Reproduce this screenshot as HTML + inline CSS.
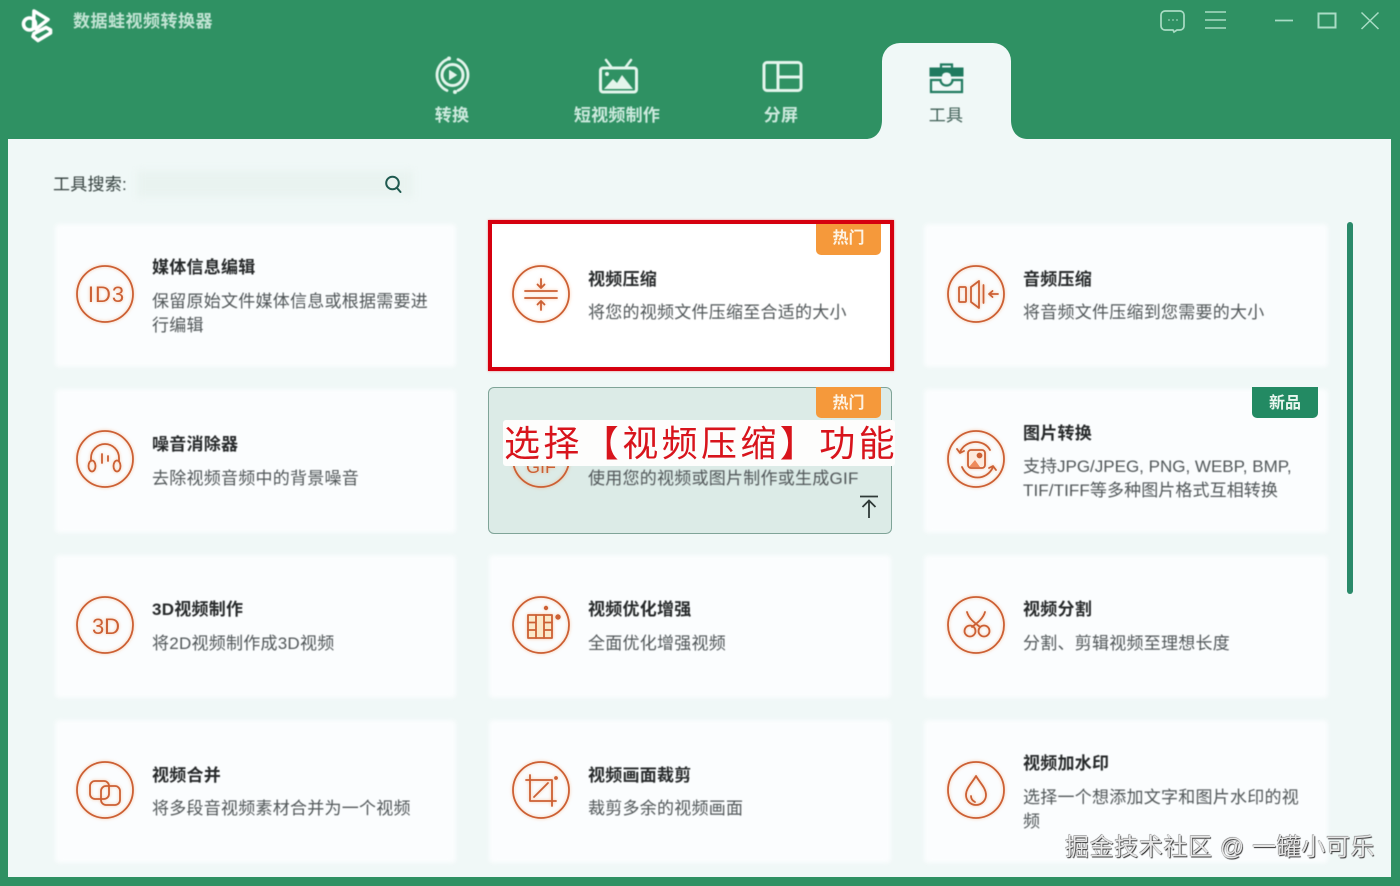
<!DOCTYPE html>
<html lang="zh-CN">
<head>
<meta charset="utf-8">
<title>数据蛙视频转换器</title>
<style>
html,body{margin:0;padding:0}
body{width:1400px;height:886px;position:relative;overflow:hidden;background:#2f9163;font-family:"Liberation Sans","Noto Sans CJK SC",sans-serif}
#main{position:absolute;left:8px;top:139px;width:1383px;height:738px;background:#f0f8f7}
.card{position:absolute;background:#fbfdfe;border-radius:4px;filter:blur(2.5px)}
.t,.d,.n{position:absolute;white-space:nowrap;line-height:24px;font-size:17px;letter-spacing:.25px}
.t{font-weight:700;color:#26292a;filter:blur(.45px)}
.d{color:#505658;filter:blur(.45px)}
.n{color:#cdeade;font-size:17px;filter:blur(.5px);text-align:center;font-weight:700}
svg{position:absolute;overflow:visible}
.ic{width:60px;height:60px;fill:none;stroke:#cc6034;stroke-width:1.8;stroke-linecap:round;stroke-linejoin:round;filter:blur(.35px) drop-shadow(0 0 1.500px rgba(245,150,90,.55))}
.badge{position:absolute;width:65px;height:31px;background:#f5993b;border-radius:0 0 5px 5px;color:#fdf3e4;font-size:16px;font-weight:700;text-align:center;filter:blur(.3px)}
</style>
</head>
<body>
<div id="main"></div>

<!-- top bar logo and title -->
<svg style="left:0;top:0;filter:blur(.4px)" width="60" height="50" viewBox="0 0 60 50" fill="none" stroke="#fff" stroke-width="3.600" stroke-linejoin="round" stroke-linecap="round">
<path d="M34 11 L48 19.500 L36 29 L33.500 27 Z"/>
<circle cx="29.500" cy="24" r="6"/>
<path d="M34 33.500 L46 27.500 L50.500 30 L50.500 33 L38 40.500 L33 36.500 Z"/>
</svg>
<div class="n" style="left:73px;top:10px;letter-spacing:.5px;color:#c3e4d4;font-size:17px;font-weight:700">数据蛙视频转换器</div>

<!-- window controls -->
<svg style="left:1150px;top:0;filter:blur(.3px)" width="250" height="40" viewBox="1150 0 250 40" fill="none" stroke="#a9dcc5" stroke-width="1.700">
<path d="M1165 11h15a4 4 0 0 1 4 4v11a4 4 0 0 1-4 4h-3l-3 2-1-2h-8a4 4 0 0 1-4-4V15a4 4 0 0 1 4-4z"/>
<path d="M1168.500 20h1M1172.500 20h1M1176.500 20h1" stroke-width="2"/>
<path d="M1205 12h21M1205 20h21M1205 28h21" stroke-width="1.500"/>
<path d="M1275 20.500h18" stroke-width="1.800"/>
<rect x="1318.500" y="13.500" width="17" height="14" stroke-width="2"/>
<path d="M1361.500 12.500l17 16.500M1378.500 12.500l-17 16.500" stroke-width="1.500"/>
</svg>

<!-- active tab -->
<div style="position:absolute;left:882px;top:43px;width:129px;height:110px;background:#f0f8f7;border-radius:18px 18px 0 0"></div>
<svg style="left:866px;top:120px" width="16" height="20" viewBox="0 0 16 20"><path d="M16 0V19H0C9 19 16 12 16 0Z" fill="#f0f8f7"/></svg>
<svg style="left:1011px;top:120px" width="16" height="20" viewBox="0 0 16 20"><path d="M0 0V19H16C7 19 0 12 0 0Z" fill="#f0f8f7"/></svg>

<!-- nav icons -->
<svg style="left:430px;top:53px;filter:blur(.4px)" width="46" height="44" viewBox="430 53 46 44" fill="none" stroke="#e4f5ec" stroke-linecap="round">
<path d="M447 59.500A17 17 0 0 0 447 90.500" stroke-width="2.800"/>
<path d="M458 59.500A17 17 0 0 1 458 90.500" stroke-width="2.800"/>
<circle cx="449" cy="58.500" r="2" fill="#e4f5ec" stroke="none"/>
<circle cx="455" cy="92" r="2" fill="#e4f5ec" stroke="none"/>
<circle cx="452.500" cy="75" r="10.500" stroke-width="3"/>
<path d="M449.500 70.500l7 4.500-7 4.500z" fill="#e4f5ec" stroke-width="1" stroke-linejoin="round"/>
</svg>
<svg style="left:595px;top:55px;filter:blur(.4px)" width="46" height="42" viewBox="595 55 46 42" fill="none" stroke="#e4f5ec" stroke-linecap="round" stroke-linejoin="round">
<rect x="600.500" y="68" width="36" height="24" rx="2.500" stroke-width="3"/>
<path d="M606 60l6 8M631 60l-6 8" stroke-width="2.500"/>
<path d="M604 89l9-10 4 4 5-8 11 14z" fill="#e4f5ec" stroke="none"/>
<circle cx="607" cy="74" r="2" fill="#e4f5ec" stroke="none"/>
</svg>
<svg style="left:760px;top:58px;filter:blur(.4px)" width="46" height="38" viewBox="760 58 46 38" fill="none" stroke="#e4f5ec" stroke-width="3">
<rect x="764" y="62.500" width="37" height="28" rx="3"/>
<path d="M778 62.500v28M778 77h23"/>
</svg>
<svg style="left:926px;top:60px;filter:blur(.4px)" width="42" height="36" viewBox="926 60 42 36" fill="none" stroke="#1f7a5f" stroke-width="2.200">
<path d="M941 68v-3.500h11V68" />
<path d="M930 68h33v8h-11.500a5 4 0 0 0-10 0H930z" fill="#1f7a5f" stroke="#1f7a5f" stroke-width="1"/>
<path d="M931 80v12h31V80h-9.500a6 5.500 0 0 1-12 0z"/>
</svg>

<div class="n" style="left:402px;top:104px;width:100px">转换</div>
<div class="n" style="left:557px;top:104px;width:120px">短视频制作</div>
<div class="n" style="left:731px;top:104px;width:100px">分屏</div>
<div class="n" style="left:896px;top:104px;width:100px;color:#3f5f56;font-weight:400">工具</div>

<!-- search -->
<div class="d" style="left:53px;top:173px;color:#34403e">工具搜索:</div>
<div style="position:absolute;left:137px;top:171px;width:276px;height:26px;background:#e9f3f0;filter:blur(4px)"></div>
<svg style="left:382px;top:173px" width="22" height="22" viewBox="0 0 22 22" fill="none" stroke="#1f5a50" stroke-width="2" stroke-linecap="round"><circle cx="10.500" cy="10" r="6.300"/><path d="M15 15l3.500 4"/></svg>

<!-- scrollbar -->
<div style="position:absolute;left:1347px;top:222px;width:6px;height:372px;border-radius:3px;background:#2a8a6a"></div>

<!-- cards -->
<div class="card" style="left:55px;top:224px;width:401px;height:143px"></div>
<div class="card" style="left:489px;top:224px;width:402px;height:143px;background:#fff"></div>
<div class="card" style="left:924px;top:224px;width:404px;height:143px"></div>
<div class="card" style="left:55px;top:389px;width:401px;height:144px"></div>
<div style="position:absolute;border-radius:6px;left:488px;top:387px;width:402px;height:145px;background:#dcebe7;border:1px solid #7fa498"></div>
<div class="card" style="left:924px;top:389px;width:404px;height:144px"></div>
<div class="card" style="left:55px;top:555px;width:401px;height:143px"></div>
<div class="card" style="left:489px;top:555px;width:402px;height:143px"></div>
<div class="card" style="left:924px;top:555px;width:404px;height:143px"></div>
<div class="card" style="left:55px;top:720px;width:401px;height:143px"></div>
<div class="card" style="left:489px;top:720px;width:402px;height:143px"></div>
<div class="card" style="left:924px;top:720px;width:404px;height:143px"></div>

<!-- red box -->
<div style="position:absolute;left:488px;top:220px;width:398px;height:143px;border:4px solid #d5000f;box-shadow:0 0 2px rgba(230,60,60,.6)"></div>

<!-- badges -->
<div class="badge" style="left:816px;top:224px;line-height:29px">热门</div>
<div class="badge" style="left:816px;top:387px;line-height:34px">热门</div>
<div class="badge" style="left:1252px;top:387px;width:66px;background:#238a63;color:#e9f6ef;line-height:34px">新品</div>

<!-- icons -->
<svg class="ic" style="left:75px;top:264px" viewBox="0 0 60 60"><circle cx="30" cy="30" r="28"/><text x="31.500" y="38" text-anchor="middle" font-family="Liberation Sans,sans-serif" font-size="22" letter-spacing="1" fill="#cc6034" stroke="none">ID3</text></svg>

<svg class="ic" style="left:511px;top:264px" viewBox="0 0 60 60"><circle cx="30" cy="30" r="28"/><path d="M14 27h32M14 34h32M30 15v9M26.500 20.500L30 24l3.500-3.500M30 46v-9M26.500 40.500L30 37l3.500 3.500"/></svg>

<svg class="ic" style="left:946px;top:264px" viewBox="0 0 60 60"><circle cx="30" cy="30" r="28"/><rect x="13" y="23" width="7" height="15" rx="1"/><path d="M25 23l8-6v27l-8-6zM37.500 21v18M52 30h-9M46.500 27L43 30l3.500 3"/></svg>

<svg class="ic" style="left:75px;top:429px" viewBox="0 0 60 60"><circle cx="30" cy="30" r="28"/><path d="M16 32v-3a14 14 0 0 1 28 0v3M27 25v9M33 27v5"/><ellipse cx="17" cy="37" rx="3.500" ry="5.500"/><ellipse cx="42" cy="37" rx="3.500" ry="5.500"/></svg>

<svg class="ic" style="left:511px;top:429px" viewBox="0 0 60 60"><circle cx="30" cy="30" r="28"/><text x="30" y="44" text-anchor="middle" font-family="Liberation Sans,sans-serif" font-size="18" fill="#cc6034" stroke="none">GIF</text></svg>

<svg class="ic" style="left:946px;top:429px" viewBox="0 0 60 60"><circle cx="30" cy="30" r="28"/><rect x="22" y="21" width="17" height="18" rx="3" fill="#fde9dc"/><circle cx="33.500" cy="26.500" r="2" fill="#cc6034"/><path d="M23 38l6-7 5 7z" fill="#ee8a5a" stroke="none"/><path d="M14 23C20 10 38 10 44 21M47 38C41 52 22 52 16 38M11 20l3 4 4-2M50 41l-3-4-4 2"/></svg>

<svg class="ic" style="left:75px;top:595px" viewBox="0 0 60 60"><circle cx="30" cy="30" r="28"/><text x="31" y="39" text-anchor="middle" font-family="Liberation Sans,sans-serif" font-size="22" fill="#cc6034" stroke="none">3D</text></svg>

<svg class="ic" style="left:511px;top:595px" viewBox="0 0 60 60"><circle cx="30" cy="30" r="28"/><rect x="17" y="20" width="24" height="23" fill="#fbe9c9"/><path d="M25 20v23M33 20v23M17 27.500h8M17 35h8M33 27.500h8M33 35h8"/><circle cx="35" cy="13" r="1.300" fill="#cc6034"/><circle cx="47" cy="22" r="1.800" fill="#cc6034"/></svg>

<svg class="ic" style="left:946px;top:595px" viewBox="0 0 60 60"><circle cx="30" cy="30" r="28"/><circle cx="24" cy="36" r="5.500"/><circle cx="38" cy="36" r="5.500"/><path d="M21 17C23 24 29 28 34 32M39 17C37 24 31 28 26 32"/></svg>

<svg class="ic" style="left:75px;top:760px" viewBox="0 0 60 60"><circle cx="30" cy="30" r="28"/><rect x="15" y="21" width="19" height="18" rx="5"/><rect x="26" y="26" width="19" height="19" rx="5"/></svg>

<svg class="ic" style="left:511px;top:760px" viewBox="0 0 60 60"><circle cx="30" cy="30" r="28"/><path d="M19 15v26h26M15 20h26v26M23 37l14-14"/><circle cx="45" cy="18" r="1" fill="#cc6034"/></svg>

<svg class="ic" style="left:946px;top:760px" viewBox="0 0 60 60"><circle cx="30" cy="30" r="28"/><path d="M30 16c-4 7-10 12-10 19a10 10 0 0 0 20 0c0-7-6-12-10-19zM25 36c0 3 2 5 4 6"/></svg>

<!-- row 1 -->
<div class="t" style="left:152px;top:256px">媒体信息编辑</div>
<div class="d" style="left:152px;top:290px">保留原始文件媒体信息或根据需要进</div>
<div class="d" style="left:152px;top:314px">行编辑</div>
<div class="t" style="left:588px;top:268px">视频压缩</div>
<div class="d" style="left:588px;top:301px">将您的视频文件压缩至合适的大小</div>
<div class="t" style="left:1023px;top:268px">音频压缩</div>
<div class="d" style="left:1023px;top:301px">将音频文件压缩到您需要的大小</div>

<!-- row 2 -->
<div class="t" style="left:152px;top:433px">噪音消除器</div>
<div class="d" style="left:152px;top:467px">去除视频音频中的背景噪音</div>
<div class="t" style="left:588px;top:433px">GIF制作</div>
<div class="d" style="left:588px;top:467px">使用您的视频或图片制作或生成GIF</div>
<div class="t" style="left:1023px;top:422px">图片转换</div>
<div class="d" style="left:1023px;top:455px;letter-spacing:0">支持JPG/JPEG, PNG, WEBP, BMP,</div>
<div class="d" style="left:1023px;top:479px;letter-spacing:.1px">TIF/TIFF等多种图片格式互相转换</div>
<svg style="left:858px;top:494px" width="22" height="26" viewBox="0 0 22 26" fill="none" stroke="#2f3a38" stroke-width="1.800"><path d="M2 2.500h18M11 7v17M4.500 13L11 6.500 17.500 13"/></svg>

<!-- overlay caption -->
<div style="position:absolute;left:503px;top:420px;width:392px;height:46px;background:#fdfdfc;border-radius:3px"></div>
<div style="position:absolute;left:504px;top:421px;white-space:nowrap;font-size:36px;line-height:46px;letter-spacing:3.400px;color:#d8141c;font-family:'Liberation Sans','Noto Sans CJK SC',sans-serif;filter:blur(.3px)">选择【视频压缩】功能</div>

<!-- row 3 -->
<div class="t" style="left:152px;top:598px">3D视频制作</div>
<div class="d" style="left:152px;top:632px">将2D视频制作成3D视频</div>
<div class="t" style="left:588px;top:598px">视频优化增强</div>
<div class="d" style="left:588px;top:632px">全面优化增强视频</div>
<div class="t" style="left:1023px;top:598px">视频分割</div>
<div class="d" style="left:1023px;top:632px">分割、剪辑视频至理想长度</div>

<!-- row 4 -->
<div class="t" style="left:152px;top:764px">视频合并</div>
<div class="d" style="left:152px;top:797px">将多段音视频素材合并为一个视频</div>
<div class="t" style="left:588px;top:764px">视频画面裁剪</div>
<div class="d" style="left:588px;top:797px">裁剪多余的视频画面</div>
<div class="t" style="left:1023px;top:752px">视频加水印</div>
<div class="d" style="left:1023px;top:786px">选择一个想添加文字和图片水印的视</div>
<div class="d" style="left:1023px;top:810px">频</div>

<!-- watermark -->
<div style="position:absolute;left:1065px;top:832px;white-space:nowrap;font-size:24px;line-height:32px;letter-spacing:.6px;color:#e6e6e6;text-shadow:.8px .8px .8px #333,-.4px -.4px .6px #666">掘金技术社区 @ 一罐小可乐</div>
</body>
</html>
